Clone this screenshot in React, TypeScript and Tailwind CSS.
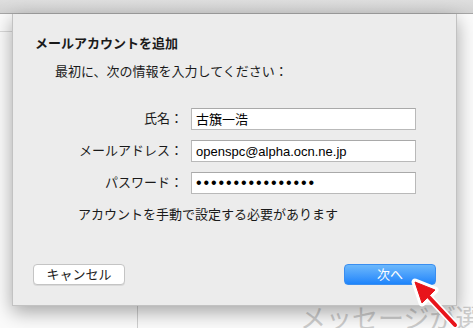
import React from 'react';

const jp = { fontFamily: '"Liberation Sans", "Noto Sans CJK JP", sans-serif' };

const fields = [
  { label: '氏名：', value: '古籏一浩' },
  { label: 'メールアドレス：', value: 'openspc@alpha.ocn.ne.jp' },
  { label: 'パスワード：', value: '••••••••••••••••', secret: true },
];

const App: React.FC = () => {
  return (
    <div className="relative w-[473px] h-[328px] overflow-hidden bg-white text-[#1a1a1a]" style={jp}>
      {/* window toolbar */}
      <div className="h-[14px] bg-gradient-to-b from-[#dedede] to-[#d3d3d3] border-b border-[#a6a6a6]" />

      <div className="flex h-[314px]">
        <aside className="w-[138px] shrink-0 border-r border-[#cfcfcf] bg-[#fbfbfb]">
          <div className="h-[18px] border-b border-[#d9d9d9]" />
        </aside>
        <main className="flex-1 bg-[#fbfbfb] pt-[292px] pl-[162px] whitespace-nowrap overflow-hidden">
          <span className="text-[26px] leading-none text-[#cdcdcd]">メッセージが選択されていません</span>
        </main>
      </div>

      {/* sheet */}
      <div className="absolute left-[12px] top-[14px] w-[445px] h-[292px] bg-[#ececec] flex flex-col shadow-[0_6px_18px_rgba(0,0,0,0.35)] border-x border-b border-[#c2c2c2]">
        <h2 className="pt-[22px] pl-[22px] text-[13px] leading-[16px] font-bold">メールアカウントを追加</h2>
        <p className="mt-[12px] pl-[42px] text-[13px] leading-[16px]">最初に、次の情報を入力してください：</p>

        <div className="mt-[28px] flex flex-col gap-[10px]">
          {fields.map((f) => (
            <div key={f.label} className="flex items-center gap-[8px]">
              <span className="w-[170px] text-right text-[13px] leading-[16px]">{f.label}</span>
              <div className="w-[225px] h-[22px] bg-white border border-[#b9b9b9] border-t-[#a9a9a9] flex items-center px-[4px]">
                <span className={f.secret ? 'text-[16px] tracking-[1.9px] leading-none text-black' : 'text-[13px] leading-none text-black'}>
                  {f.value}
                </span>
              </div>
            </div>
          ))}
        </div>

        <p className="mt-[13px] pl-[65px] text-[13px] leading-[16px]">アカウントを手動で設定する必要があります</p>

        <div className="mt-auto mb-[20px] px-[20px] flex justify-between">
          <button className="w-[92px] h-[21px] rounded-[4px] bg-white border border-[#c4c4c4] shadow-[0_1px_0_rgba(0,0,0,0.08)] text-[13px] leading-none">
            キャンセル
          </button>
          <button className="w-[92px] h-[21px] rounded-[4px] bg-gradient-to-b from-[#6cb8fb] to-[#1c84fb] border border-[#3a8ef0] text-white text-[13px] leading-none">
            次へ
          </button>
        </div>
      </div>

      {/* pointer arrow */}
      <svg className="absolute left-[405px] top-[275px]" width="60" height="53" viewBox="0 0 60 53">
        <g stroke="white" strokeWidth="7" strokeLinejoin="round" strokeLinecap="round" fill="white">
          <line x1="22" y1="20" x2="50" y2="50" />
          <polygon points="10,7 17,28 30,15" />
        </g>
        <g stroke="#e8141b" fill="#e8141b" strokeLinejoin="round">
          <line x1="22" y1="20" x2="50" y2="50" strokeWidth="4" strokeLinecap="round" />
          <polygon points="10,7 17,28 30,15" strokeWidth="1" />
        </g>
      </svg>
    </div>
  );
};

export default App;
